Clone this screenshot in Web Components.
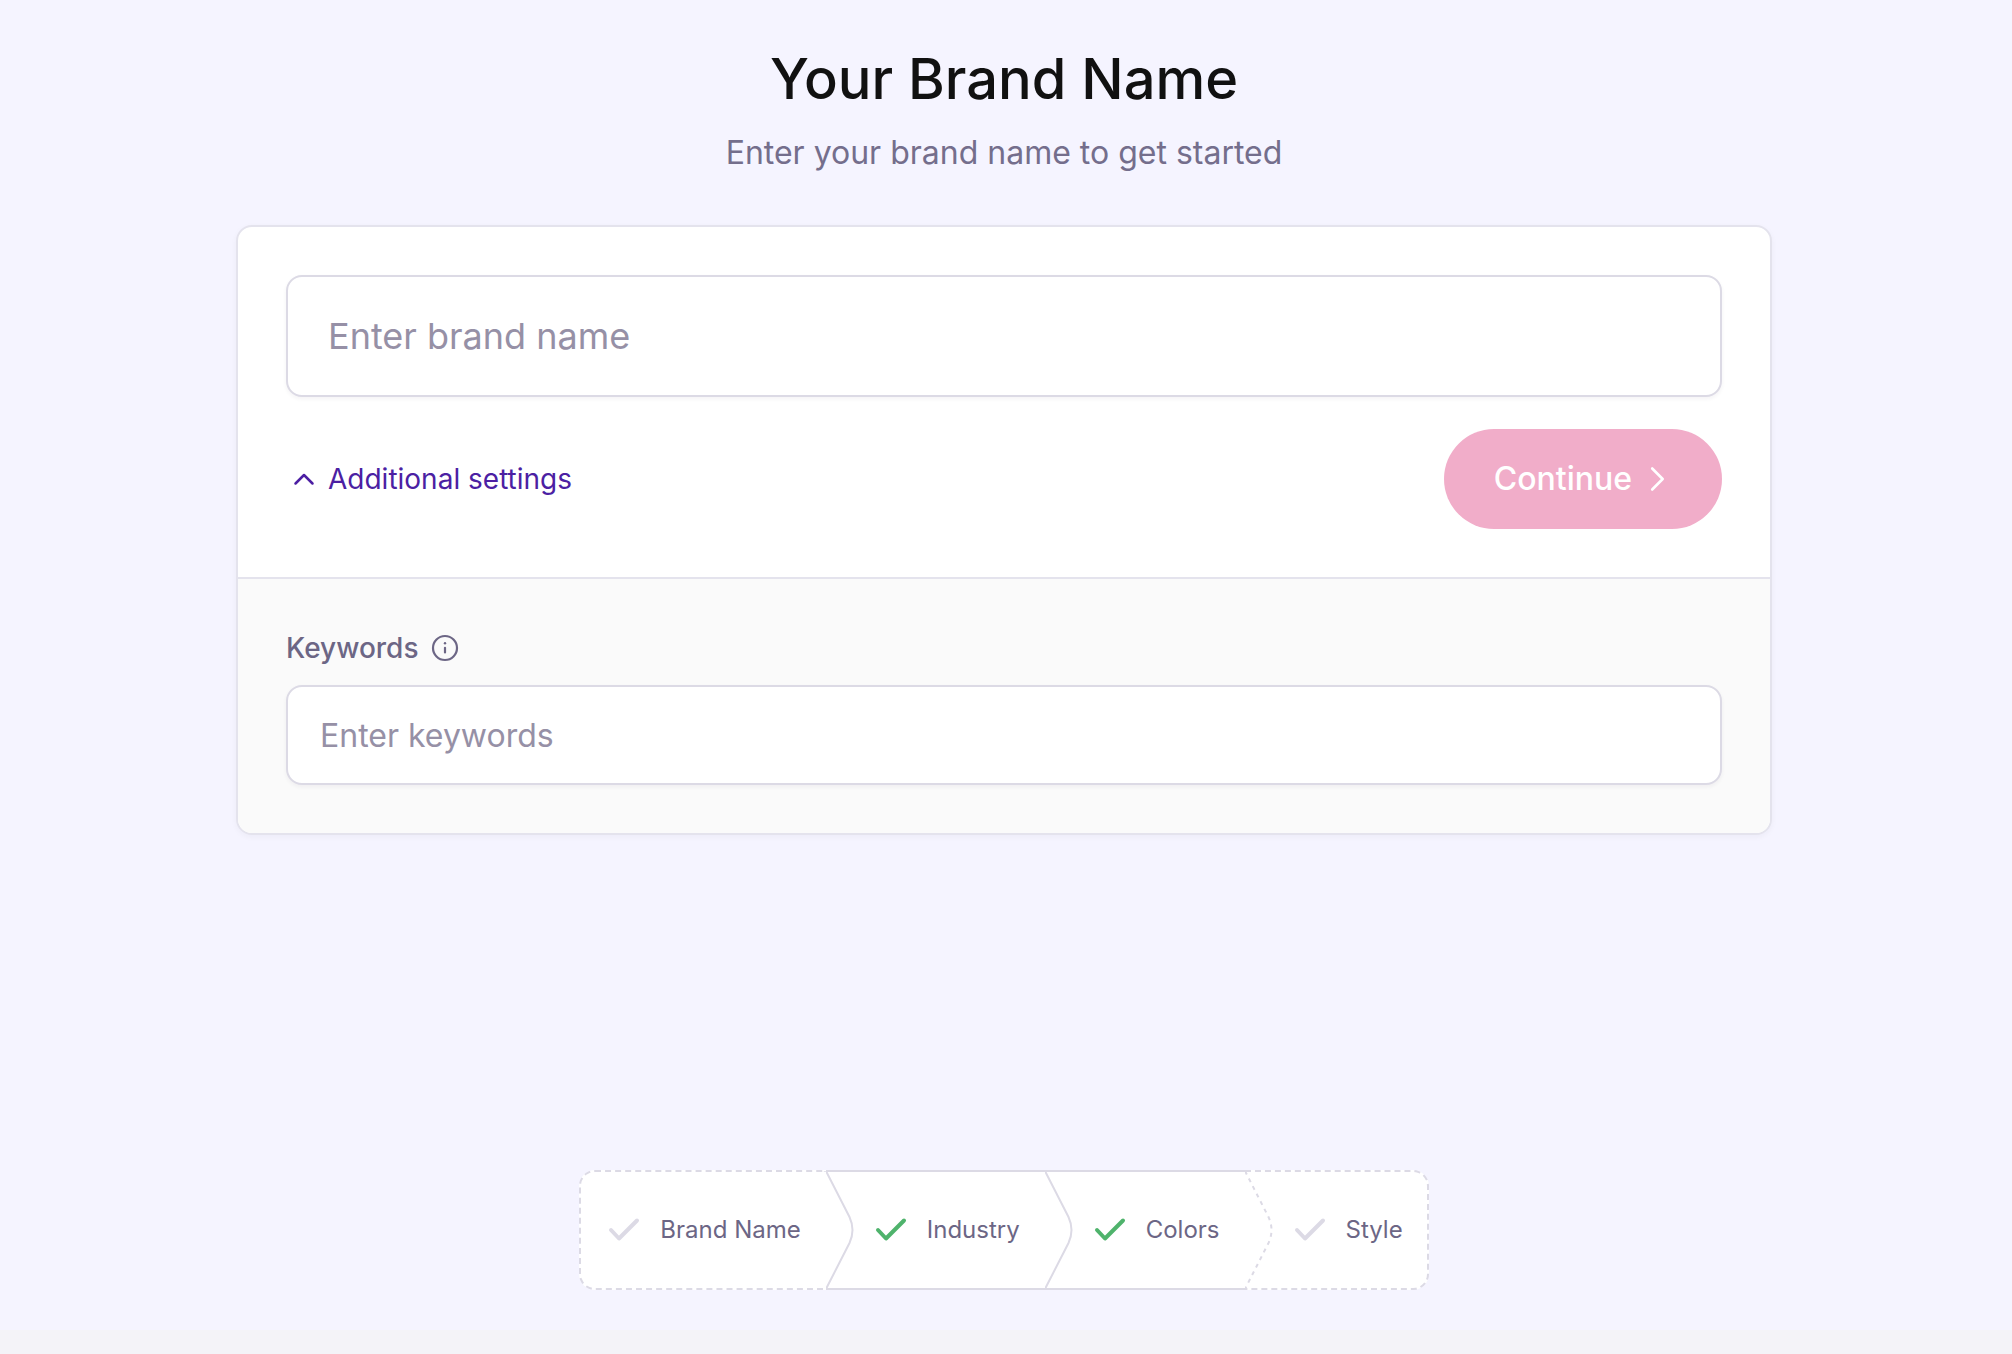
<!DOCTYPE html>
<html lang="en">
<head>
<meta charset="utf-8">
<meta name="viewport" content="width=device-width, initial-scale=1">
<title>Your Brand Name</title>
<style>
  html { background: #f4f3f8; }
  body { margin: 0; font-family: Inter, "Liberation Sans", sans-serif; color: #111; }
</style>
</head>
<body>
<brand-wizard></brand-wizard>

<template id="wizard">
  <style>
    :host { display: flex; flex-direction: column; box-sizing: border-box; min-height: 100vh; padding: 41px 4px 24px 0; background: #f5f4ff linear-gradient(#f4f3f8, #f4f3f8) bottom / 100% 24px no-repeat; }
    header { text-align: center; }
    h1 { margin: 0; font-size: 56px; line-height: 76px; font-weight: 500; }
    p { margin: 12px 0 0; font-size: 32px; line-height: 48px; color: #746e8c; }
    brand-card { width: 1536px; max-width: 94%; margin: 48px auto 0; }
    step-trail { margin: auto auto 40px; }
  </style>
  <header>
    <h1>Your Brand Name</h1>
    <p>Enter your brand name to get started</p>
  </header>
  <brand-card>
    <text-field size="large" placeholder="Enter brand name" name="Brand name"></text-field>
    <settings-toggle slot="actions">Additional settings</settings-toggle>
    <continue-button slot="actions">Continue</continue-button>
    <text-field slot="extra" placeholder="Enter keywords" label="Keywords"></text-field>
  </brand-card>
  <step-trail>
    <step-item first edge="dashed">Brand Name</step-item>
    <step-item done>Industry</step-item>
    <step-item done>Colors</step-item>
    <step-item last edge="dashed">Style</step-item>
  </step-trail>
</template>

<template id="card">
  <style>
    :host { display: block; box-sizing: border-box; border: 2px solid #e4e3ed; border-radius: 16px; background: #fff; overflow: hidden; box-shadow: 0 2px 6px rgba(30, 20, 60, .04); }
    .main, .extra { padding: 48px; }
    .extra { border-top: 2px solid #e4e3ed; background: #fafafa; }
    .actions { display: flex; align-items: center; justify-content: space-between; margin-top: 32px; }
  </style>
  <section class="main"><slot></slot><div class="actions"><slot name="actions"></slot></div></section>
  <section class="extra"><slot name="extra"></slot></section>
</template>

<template id="field">
  <style>
    :host { display: block; }
    .caption { display: flex; align-items: center; gap: 12px; margin-bottom: 16px; font-size: 28px; line-height: 42px; font-weight: 500; color: #6c6685; }
    .caption[hidden] { display: none; }
    svg { display: block; }
    input { display: block; box-sizing: border-box; width: 100%; height: 100px; padding: 0 32px; border: 2px solid #dcdae5; border-radius: 16px; background: #fff; color: #111; font: 400 32px Inter, "Liberation Sans", sans-serif; box-shadow: 0 2px 4px rgba(30, 20, 60, .05); outline: none; }
    input:focus { border-color: #4a1fa8; }
    input::placeholder { color: #9690a6; opacity: 1; }
    :host([size="large"]) input { height: 122px; padding: 0 40px; font-size: 36px; }
  </style>
  <div class="caption" hidden>
    <label for="control"></label>
    <svg width="28" height="28" viewBox="0 0 28 28" fill="none" stroke="#6c6685" stroke-width="2.2" stroke-linecap="round" aria-hidden="true"><circle cx="14" cy="14" r="12"/><path d="M14 13.8v4.600"/><circle cx="14" cy="9.300" r="1.200" fill="#6c6685" stroke="none"/></svg>
  </div>
  <input id="control" type="text">
</template>

<template id="toggle">
  <style>
    :host { display: block; }
    button { display: flex; align-items: center; gap: 8px; padding: 0 0 0 2px; border: 0; background: none; color: #4c1fa3; font: 400 28px/42px Inter, "Liberation Sans", sans-serif; cursor: pointer; }
    svg { display: block; }
  </style>
  <button type="button" aria-expanded="true">
    <svg width="32" height="32" viewBox="0 0 32 32" fill="none" stroke="currentColor" stroke-width="2.5" stroke-linecap="round" stroke-linejoin="round" aria-hidden="true"><path d="M7.5 20.500 16 12l8.500 8.500"/></svg>
    <span><slot></slot></span>
  </button>
</template>

<template id="continue">
  <style>
    :host { display: block; }
    button { display: flex; align-items: center; gap: 12px; height: 100px; padding: 0 50px; border: 0; border-radius: 50px; background: #f1adc9; color: #fff; font: 500 32px/48px Inter, "Liberation Sans", sans-serif; cursor: pointer; }
    svg { display: block; }
  </style>
  <button type="button">
    <span><slot></slot></span>
    <svg width="28" height="32" viewBox="0 0 28 32" fill="none" stroke="currentColor" stroke-width="2.600" stroke-linecap="round" stroke-linejoin="round" aria-hidden="true"><path d="M8.200 5.500 18.700 16 8.200 26.500"/></svg>
  </button>
</template>

<template id="trail">
  <style>
    :host { display: flex; box-sizing: border-box; height: 120px; }
  </style>
  <slot></slot>
</template>

<template id="step">
  <style>
    :host { display: flex; align-items: center; box-sizing: border-box; padding-right: 25px; border: 0 solid #dcdae5; border-width: 2px 0; background: #fff; font-size: 24px; line-height: 36px; color: #6c6685; }
    :host([edge="dashed"]) { border-style: dashed; }
    :host([first]) { padding-left: 27px; border-left-width: 2px; border-radius: 16px 0 0 16px; }
    :host([last]) { padding-right: 24px; border-right-width: 2px; border-radius: 0 16px 16px 0; }
    svg { display: block; flex: none; }
    .arrow { margin-right: 20px; }
    :host([first]) .arrow { display: none; }
    :host([edge="dashed"]) .arrow { stroke-dasharray: 4 4.500; }
    .tick { margin-right: 20px; stroke: #dcdae5; }
    :host([done]) .tick { stroke: #4fb36c; }
  </style>
  <svg class="arrow" width="29" height="116" viewBox="0 0 29 116" fill="none" stroke="#dcdae5" stroke-width="2" aria-hidden="true"><path d="M0 -1 23.500 45Q29.500 58 23.500 71L0 117"/></svg>
  <svg class="tick" width="32" height="32" viewBox="0 0 32 32" fill="none" stroke-width="4" stroke-linecap="round" stroke-linejoin="round" aria-hidden="true"><path d="M3 16 11 24.500 29 6.500"/></svg>
  <span><slot></slot></span>
</template>

<script>
  class TemplateElement extends HTMLElement {
    constructor() {
      super();
      const template = document.getElementById(this.constructor.template);
      this.attachShadow({ mode: "open" }).append(template.content.cloneNode(true));
    }
  }

  class TextField extends TemplateElement {
    static template = "field";
    connectedCallback() {
      const input = this.shadowRoot.querySelector("input");
      input.placeholder = this.getAttribute("placeholder") || "";
      const label = this.getAttribute("label");
      if (label) {
        this.shadowRoot.querySelector("label").textContent = label;
        this.shadowRoot.querySelector(".caption").hidden = false;
      } else {
        input.setAttribute("aria-label", this.getAttribute("name") || input.placeholder);
      }
    }
  }

  customElements.define("text-field", TextField);
  customElements.define("settings-toggle", class extends TemplateElement { static template = "toggle"; });
  customElements.define("continue-button", class extends TemplateElement { static template = "continue"; });
  customElements.define("brand-card", class extends TemplateElement { static template = "card"; });
  customElements.define("step-item", class extends TemplateElement { static template = "step"; });
  customElements.define("step-trail", class extends TemplateElement { static template = "trail"; });
  customElements.define("brand-wizard", class extends TemplateElement { static template = "wizard"; });
</script>
</body>
</html>
